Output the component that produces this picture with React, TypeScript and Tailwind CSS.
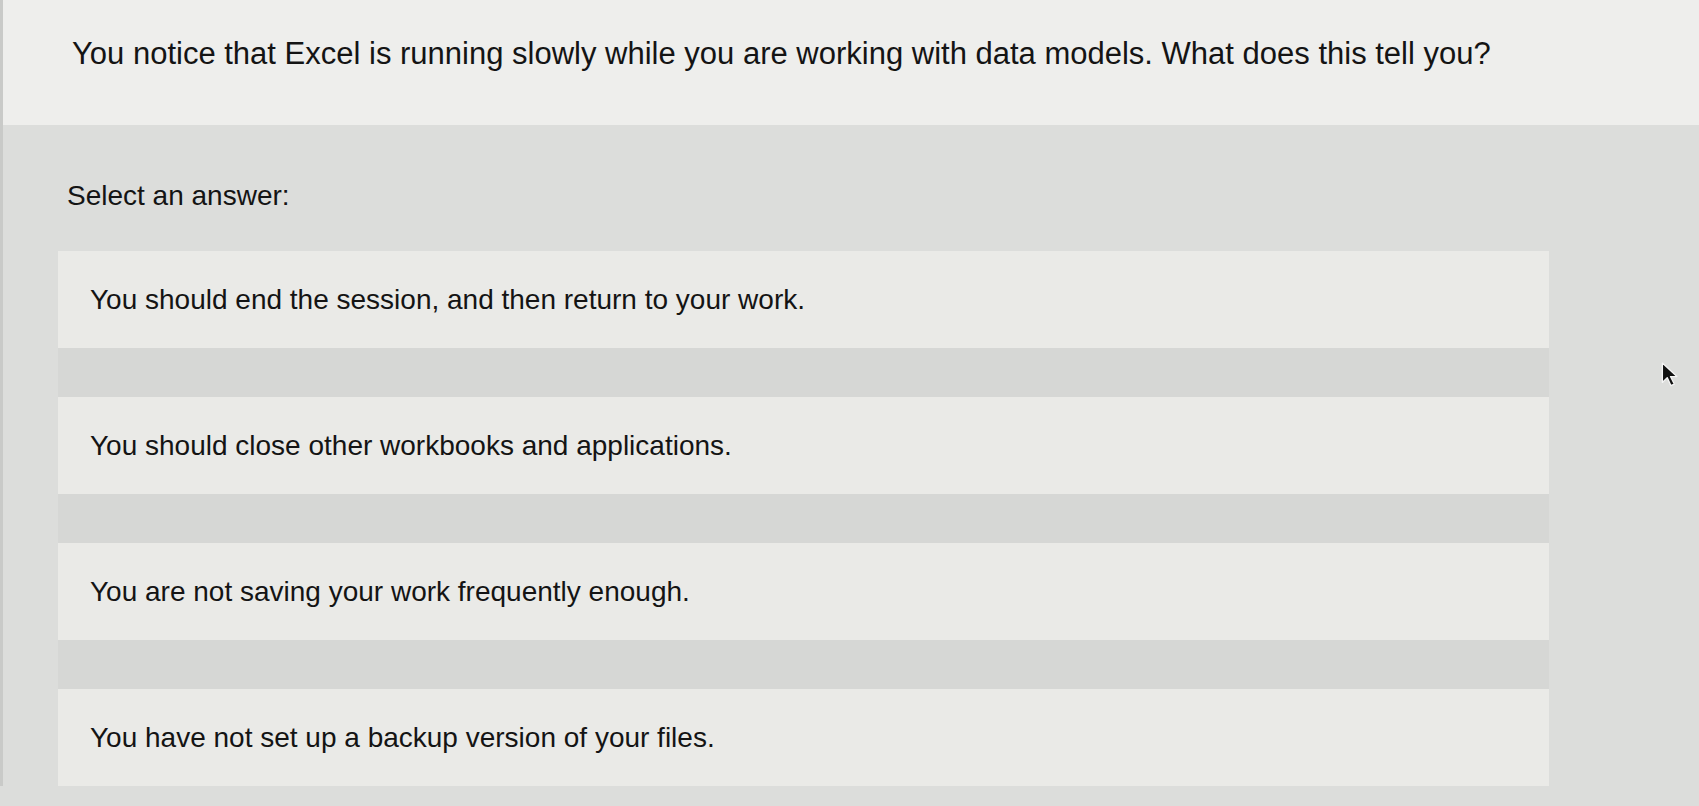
const options = [
  'You should end the session, and then return to your work.',
  'You should close other workbooks and applications.',
  'You are not saving your work frequently enough.',
  'You have not set up a backup version of your files.',
];

function Cursor() {
  return (
    <svg className="absolute left-[1660px] top-[362px]" width="22" height="28" viewBox="0 0 20 26">
      <path d="M2 1 L2 19 L6.5 14.5 L10 22 L13 20.5 L9.5 13.5 L15.5 13.5 Z" fill="#111" stroke="#f5f5f5" strokeWidth="1.2" strokeLinejoin="round" />
    </svg>
  );
}

export default function App() {
  return (
    <div className="relative h-[806px] w-[1699px] overflow-hidden bg-[#dcdddb] text-[#141414]" style={{ fontFamily: '"Liberation Sans", Arial, sans-serif' }}>
      <div className="flex h-[125px] items-start border-l-[3px] border-[#c9cac8] bg-[#eeeeec] pl-[69px] pt-[34px]">
        <h1 className="text-[31px] leading-[40px]">
          You notice that Excel is running slowly while you are working with data models. What does this tell you?
        </h1>
      </div>

      <div className="border-l-[3px] border-[#c9cac8] pt-[54px]">
        <p className="pl-[64px] text-[28px] leading-[34px]">Select an answer:</p>

        <div className="ml-[55px] mt-[38px] flex w-[1491px] flex-col gap-[49px] bg-[#d6d7d5]">
          {options.map((o) => (
            <div key={o} className="flex h-[97px] items-center bg-[#eaeae7] pl-[32px]">
              <span className="text-[28px] leading-[34px]">{o}</span>
            </div>
          ))}
        </div>
      </div>

      <Cursor />
    </div>
  );
}
